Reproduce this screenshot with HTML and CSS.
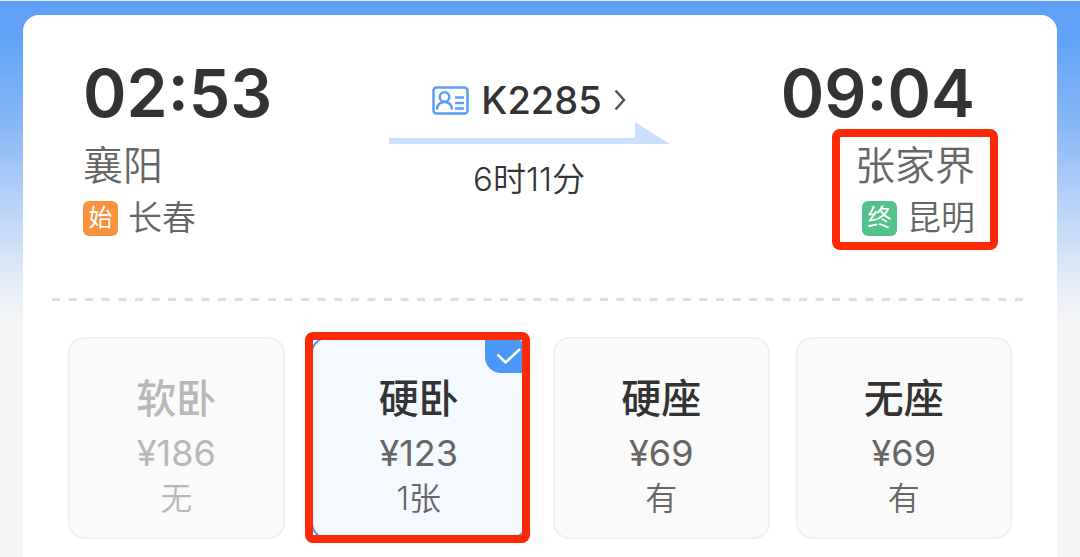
FILE: index.html
```html
<!DOCTYPE html>
<html lang="zh-CN">
<head>
<meta charset="utf-8">
<meta name="viewport" content="width=device-width, initial-scale=1">
<title>K2285</title>
<link rel="stylesheet" href="styles.css">
</head>
<body>
<main class="ticket">
  <section class="journey">
    <div class="stop">
      <time class="clock">02:53</time>
      <div class="places">
        <div class="station">襄阳</div>
        <div class="terminal"><span class="tag tag-start">始</span>长春</div>
      </div>
    </div>
    <div class="route">
      <button class="train" type="button">
        <svg class="id-icon" width="37" height="29" viewBox="0 0 37 29" fill="none" stroke="#5c9df5" stroke-width="2.500">
          <rect x="1.500" y="1.500" width="34" height="26" rx="3"/>
          <circle cx="12.500" cy="11" r="4.800"/>
          <path d="M5 23.500c.3-4.800 3-7.500 7.500-7.500s7.200 2.700 7.500 7.500M23 11.500h9M23 17h9M23 22.500h9"/>
        </svg>
        <span>K2285</span>
        <svg class="chevron" width="12" height="22" viewBox="0 0 12 22" fill="none" stroke="#555" stroke-width="2.500"><path d="M1.500 1.500 10 11l-8.500 9.500"/></svg>
      </button>
      <svg class="arrow" width="281" height="22" viewBox="0 0 281 22" fill="#cbe0fc"><path d="M0 16h246V0l35 22H0z"/></svg>
      <div class="duration">6时11分</div>
    </div>
    <div class="stop stop-end">
      <time class="clock">09:04</time>
      <div class="places marked">
        <div class="station">张家界</div>
        <div class="terminal"><span class="tag tag-end">终</span>昆明</div>
      </div>
    </div>
  </section>
  <svg class="divider" height="3" aria-hidden="true"><line x1="0" y1="1.500" x2="100%" y2="1.500" stroke="#dedede" stroke-width="3" stroke-dasharray="8 8.600"/></svg>
  <section class="seats">
    <button class="seat sold-out" type="button" disabled>
      <span class="kind">软卧</span><span class="price">¥186</span><span class="left">无</span>
    </button>
    <button class="seat selected marked" type="button" aria-pressed="true">
      <span class="check"><svg width="26" height="18" viewBox="0 0 26 18" fill="none" stroke="#fff" stroke-width="2.500"><path d="m1.500 7.500 8 8L24 2"/></svg></span>
      <span class="kind">硬卧</span><span class="price">¥123</span><span class="left">1张</span>
    </button>
    <button class="seat" type="button">
      <span class="kind">硬座</span><span class="price">¥69</span><span class="left">有</span>
    </button>
    <button class="seat" type="button">
      <span class="kind">无座</span><span class="price">¥69</span><span class="left">有</span>
    </button>
  </section>
</main>
</body>
</html>
```
FILE: styles.css
```css
* { box-sizing: border-box; }

body {
  margin: 0;
  min-height: 100vh;
  padding: 14px 23px 0;
  border-top: 1px solid #e4eefc;
  display: flex;
  flex-direction: column;
  background: #f4f4f5 linear-gradient(#5f9ff7 0, #62a3f8 40px, #86b6f6 120px, #b5d1f7 200px, #dde9f8 270px, #f4f4f5 320px) no-repeat;
  font-family: Inter, "Noto Sans CJK SC", sans-serif;
  color: #333;
}

button {
  border: 0;
  padding: 0;
  background: none;
  font: inherit;
  color: inherit;
}

.ticket {
  flex: 1;
  background: #fff;
  border-radius: 16px 16px 0 0;
  padding: 46px 0 18px;
}

.journey {
  display: grid;
  grid-template-columns: 1fr auto 1fr;
  padding: 0 82px 0 60px;
}

.stop {
  display: flex;
  flex-direction: column;
  align-items: flex-start;
}

.stop-end { align-items: flex-end; }

.clock {
  font-size: 66px;
  font-weight: 600;
  line-height: 64px;
}

.places {
  position: relative;
  padding-top: 16px;
  font-weight: 350;
  color: #666;
}

.station {
  font-size: 40px;
  line-height: 50px;
}

.terminal {
  display: flex;
  align-items: center;
  justify-content: flex-end;
  gap: 10px;
  padding-top: 5px;
  font-size: 34px;
  line-height: 44px;
}

.tag {
  width: 35px;
  height: 35px;
  border-radius: 6px;
  font-size: 24px;
  font-weight: 400;
  line-height: 34px;
  text-align: center;
  color: #fff;
}

.tag-start { background: #f7923d; }
.tag-end { background: #52c18c; }

.marked::after {
  content: "";
  position: absolute;
  border: 8px solid #ff2a05;
  border-radius: 8px;
  pointer-events: none;
}

.places.marked::after { inset: 4px -23px -10px -23px; }
.seat.marked::after { inset: -7px -5px -6px -8px; }

.route {
  display: flex;
  flex-direction: column;
  align-items: center;
  padding-top: 17px;
}

.train {
  display: flex;
  align-items: center;
  gap: 12px;
  font-size: 38px;
  font-weight: 500;
  line-height: 44px;
}

.duration {
  padding-top: 13px;
  font-size: 33px;
  font-weight: 350;
  line-height: 44px;
}

.divider {
  display: block;
  width: calc(100% - 58px);
  margin: 58px 29px 36px;
}

.seats {
  display: grid;
  grid-template-columns: repeat(4, 1fr);
  gap: 26px;
  padding: 0 45px;
}

.seat {
  position: relative;
  display: flex;
  flex-direction: column;
  align-items: center;
  padding: 32px 0 18px;
  border: 2px solid #f0f0f0;
  border-radius: 16px;
  background: #fafafa;
}

.kind {
  font-size: 40px;
  font-weight: 500;
  line-height: 56px;
}

.price {
  font-size: 36px;
  line-height: 52px;
  color: #666;
}

.left {
  font-size: 32px;
  font-weight: 350;
  line-height: 40px;
  color: #666;
}

.sold-out, .sold-out .price, .sold-out .left { color: #b8b8b8; }

.selected {
  border-color: #4b97f8;
  background: #f4f8ff;
}

.check {
  position: absolute;
  top: 0;
  right: 0;
  width: 40px;
  height: 34px;
  padding: 8px 0 0 11px;
  line-height: 0;
  text-align: left;
  border-radius: 0 14px 0 16px;
  background: #4b97f8;
}
```
